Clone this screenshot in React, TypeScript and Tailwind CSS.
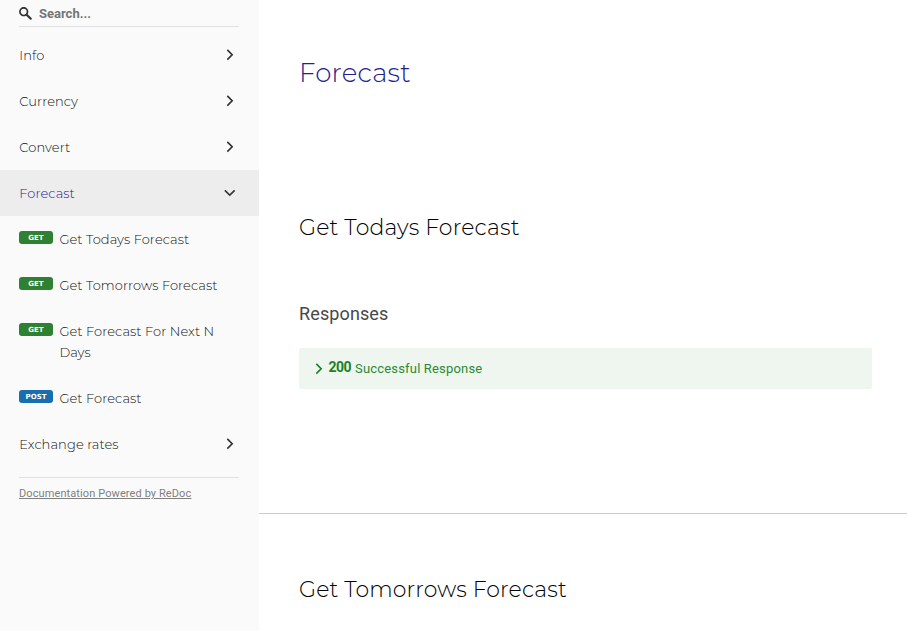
import React from "react";

function Chevron({ className }: { className: string }) {
  return (
    <svg viewBox="0 0 24 24" className={`shrink-0 ${className}`} fill="currentColor">
      <polygon points="17.3 8.3 12 13.6 6.7 8.3 5.3 9.7 12 16.4 18.7 9.7" />
    </svg>
  );
}

function Group({ text, active = false }: { text: string; active?: boolean }) {
  return (
    <li
      className={`flex h-[46px] items-center justify-between pr-5 pl-[19.3px] ${active ? "bg-[#ededed] text-[#22228f]" : "text-[#111]"}`}
    >
      <span>{text}</span>
      <Chevron className={`h-[19.5px] w-[19.5px] text-[#333] ${active ? "" : "-rotate-90"}`} />
    </li>
  );
}

function Operation({ method, text }: { method: "get" | "post"; text: string }) {
  return (
    <li className="flex items-start py-[12.5px] pr-5 pl-[19px] text-[#111]">
      <span
        className={`mt-[2.5px] mr-[6.4px] h-[13px] w-[34px] shrink-0 rounded-[3px] text-center font-[Verdana,'DejaVu_Sans',sans-serif] text-[7px] leading-[14px] font-bold tracking-normal text-white uppercase ${method === "get" ? "bg-[#2f8132]" : "bg-[#186faf]"}`}
      >
        {method}
      </span>
      <span className="w-[174px]">{text}</span>
    </li>
  );
}

export default function App() {
  return (
    <div className="flex h-[631px] w-[907px] overflow-hidden bg-white font-[Roboto,sans-serif]">
      <aside className="w-[259px] shrink-0 bg-[#fafafa]">
        <div className="mr-5 mb-[5px] ml-[19px] flex h-[27px] items-center border-b border-[#e1e1e1]">
          <svg viewBox="0 0 1000 1000" className="mr-[7px] h-[13px] w-[13px] shrink-0" fill="#333">
            <path d="M968.2,849.4L667.3,549c83.9-136.5,66.7-317.4-51.7-435.6C477.1-25,252.5-25,113.9,113.4c-138.5,138.3-138.5,362.6,0,501C219.2,730.1,413.2,743,547.6,666.5l301.9,301.4c43.6,43.6,76.9,14.9,104.2-12.4C981,928.3,1011.8,893,968.2,849.4z M524.5,522c-88.9,88.7-233,88.7-321.8,0c-88.9-88.7-88.9-232.6,0-321.3c88.9-88.7,233-88.7,321.8,0C613.4,289.4,613.4,433.3,524.5,522z" />
          </svg>
          <span className="pt-[2px] text-[13px] font-bold text-[#757575]">Search...</span>
        </div>
        <ul className="font-[Montserrat,sans-serif] text-[13px] leading-[21px] font-light tracking-[0.08px]">
          <Group text="Info" />
          <Group text="Currency" />
          <Group text="Convert" />
          <Group text="Forecast" active />
          <Operation method="get" text="Get Todays Forecast" />
          <Operation method="get" text="Get Tomorrows Forecast" />
          <Operation method="get" text="Get Forecast For Next N Days" />
          <Operation method="post" text="Get Forecast" />
          <Group text="Exchange rates" />
        </ul>
        <div className="mt-[10px] mr-5 ml-[19px] border-t border-[#e1e1e1] pt-[8px] text-[11px] leading-[16px] tracking-[0.1px] text-[#808080]">
          <a className="underline">Documentation Powered by ReDoc</a>
        </div>
      </aside>
      <main className="min-w-0 flex-1">
        <section className="h-[514px] border-b border-[#ccc] pr-[35px] pl-10">
          <h1 className="pt-[57px] font-[Montserrat,sans-serif] text-[26px] leading-[32px] font-light tracking-[0.25px] text-[#22228f]">
            Forecast
          </h1>
          <h2 className="pt-[125px] font-[Montserrat,sans-serif] text-[22px] leading-[28px] font-light tracking-[0.18px] text-black">
            Get Todays Forecast
          </h2>
          <h3 className="pt-[60px] text-[18px] leading-[24px] font-normal tracking-[0.12px] text-[#484848]">Responses</h3>
          <div className="mt-[22px] flex h-[41px] items-center rounded-[2px] bg-[#eef6ef] pl-[10px] text-[13px] text-[#1d8127]">
            <Chevron className="h-[19.5px] w-[19.5px] -rotate-90" />
            <strong className="mr-[4px] pb-[2px] text-[14px] font-bold tracking-[-0.5px]">200</strong>
            <span className="font-normal tracking-[0.17px] text-[#2b8a35]">Successful Response</span>
          </div>
        </section>
        <h2 className="pt-[62px] pl-10 font-[Montserrat,sans-serif] text-[22px] leading-[28px] font-light tracking-[0.15px] text-black">
          Get Tomorrows Forecast
        </h2>
      </main>
    </div>
  );
}
